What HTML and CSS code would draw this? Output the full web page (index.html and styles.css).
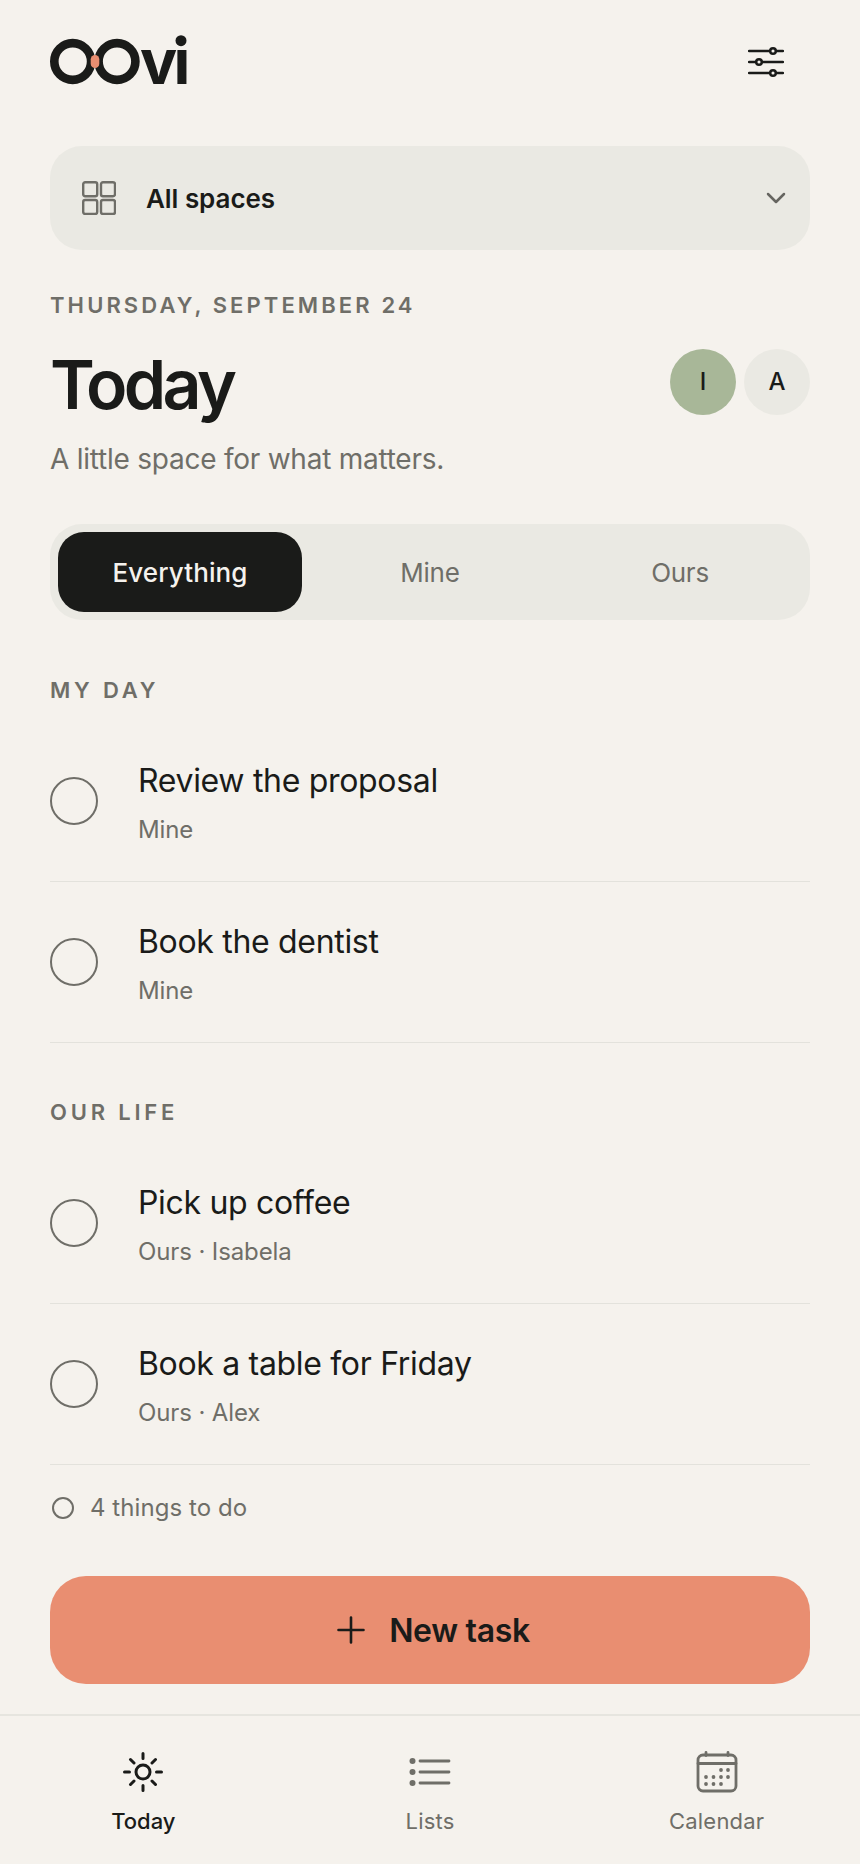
FILE: index.html
```html
<!DOCTYPE html>
<html lang="en">
<head>
<meta charset="utf-8">
<title>Oovi</title>
<link rel="stylesheet" href="styles.css">
</head>
<body>
<div class="app">
  <main class="content">
    <header class="topbar">
      <svg class="logo" viewBox="0 0 140 52" width="140" height="52" aria-label="OOvi">
        <circle cx="22.700" cy="27.500" r="18.400" fill="none" stroke="#1a1b19" stroke-width="8.600"/>
        <circle cx="67" cy="27.500" r="18.400" fill="none" stroke="#1a1b19" stroke-width="8.600"/>
        <rect x="40.700" y="21" width="8.600" height="13" rx="4.300" fill="#e98e71"/>
        <text class="logo-text" x="90" y="50">vı</text>
        <circle cx="131" cy="6.700" r="5.500" fill="#1a1b19"/>
      </svg>
      <button class="icon-btn" aria-label="Settings">
        <svg viewBox="0 0 36 34" width="36" height="34" fill="none" stroke="#1a1b19" stroke-width="2.500" stroke-linecap="round">
          <path d="M1 5h34M1 16h34M1 27h34"/>
          <circle cx="25" cy="5" r="2.800" fill="#f5f2ed"/>
          <circle cx="11" cy="16" r="2.800" fill="#f5f2ed"/>
          <circle cx="25" cy="27" r="2.800" fill="#f5f2ed"/>
        </svg>
      </button>
    </header>

    <div class="space-select">
      <svg class="grid-icon" viewBox="0 0 34 34" width="34" height="34" fill="none" stroke="#6f6e68" stroke-width="2.400">
        <rect x="1.200" y="1.200" width="14" height="14" rx="2"/>
        <rect x="19" y="1.200" width="14" height="14" rx="2"/>
        <rect x="1.200" y="19" width="14" height="14" rx="2"/>
        <rect x="19" y="19" width="14" height="14" rx="2"/>
      </svg>
      <span class="space-name">All spaces</span>
      <svg class="chevron" viewBox="0 0 20 12" width="20" height="12" fill="none" stroke="#666560" stroke-width="2.500" stroke-linecap="round" stroke-linejoin="round">
        <path d="M2 2l8 8 8-8"/>
      </svg>
    </div>

    <p class="date">THURSDAY, SEPTEMBER 24</p>
    <div class="title-row">
      <h1 class="title">Today</h1>
      <div class="avatars">
        <span class="avatar avatar-i">I</span>
        <span class="avatar avatar-a">A</span>
      </div>
    </div>
    <p class="subtitle">A little space for what matters.</p>

    <div class="segments">
      <span class="segment segment-active">Everything</span>
      <span class="segment">Mine</span>
      <span class="segment">Ours</span>
    </div>

    <section class="group">
      <h2 class="group-label">MY DAY</h2>
      <div class="task"><span class="check"></span><div class="task-text"><div class="task-title">Review the proposal</div><div class="task-meta">Mine</div></div></div>
      <div class="task"><span class="check"></span><div class="task-text"><div class="task-title">Book the dentist</div><div class="task-meta">Mine</div></div></div>
    </section>

    <section class="group">
      <h2 class="group-label">OUR LIFE</h2>
      <div class="task"><span class="check"></span><div class="task-text"><div class="task-title">Pick up coffee</div><div class="task-meta">Ours · Isabela</div></div></div>
      <div class="task"><span class="check"></span><div class="task-text"><div class="task-title">Book a table for Friday</div><div class="task-meta">Ours · Alex</div></div></div>
    </section>

    <div class="summary"><span class="summary-dot"></span><span>4 things to do</span></div>

    <button class="new-task">
      <svg viewBox="0 0 28 28" width="28" height="28" fill="none" stroke="#1a1b19" stroke-width="2.600" stroke-linecap="round"><path d="M14 1.500v25M1.500 14h25"/></svg>
      <span>New task</span>
    </button>
  </main>

  <nav class="tabbar">
    <div class="tab tab-active">
      <svg viewBox="0 0 42 42" width="42" height="42" fill="none" stroke="#1a1b19" stroke-width="3" stroke-linecap="round">
        <circle cx="21" cy="21" r="7"/>
        <path d="M21 2.500v5M21 34.500v5M2.500 21h5M34.500 21h5M8.500 8.500l3.500 3.500M30 30l3.500 3.500M8.500 33.500l3.500-3.500M30 12l3.500-3.500"/>
      </svg>
      <span>Today</span>
    </div>
    <div class="tab">
      <svg viewBox="0 0 42 42" width="42" height="42" fill="none" stroke="#6f6e68" stroke-width="2.800" stroke-linecap="round">
        <path d="M11 10h29M11 21h29M11 32h29"/>
        <g fill="#6f6e68" stroke="none"><circle cx="3.500" cy="10" r="3"/><circle cx="3.500" cy="21" r="3"/><circle cx="3.500" cy="32" r="3"/></g>
      </svg>
      <span>Lists</span>
    </div>
    <div class="tab">
      <svg viewBox="0 0 42 42" width="42" height="42" fill="none" stroke="#6f6e68" stroke-width="2.800" stroke-linecap="round">
        <rect x="2" y="4" width="38" height="36" rx="5"/>
        <path d="M2 12.500h38M10 1.500v3M32 1.500v3"/>
        <g fill="#6f6e68" stroke="none">
          <circle cx="25" cy="19" r="1.900"/><circle cx="32" cy="19" r="1.900"/>
          <circle cx="10" cy="26" r="1.900"/><circle cx="17.500" cy="26" r="1.900"/><circle cx="25" cy="26" r="1.900"/><circle cx="32" cy="26" r="1.900"/>
          <circle cx="10" cy="33" r="1.900"/><circle cx="17.500" cy="33" r="1.900"/><circle cx="25" cy="33" r="1.900"/>
        </g>
      </svg>
      <span>Calendar</span>
    </div>
  </nav>
</div>
</body>
</html>
```
FILE: styles.css
```css
* { box-sizing: border-box; }
html, body { margin: 0; padding: 0; }
body {
  background: #f5f2ed;
  color: #1a1b19;
  font-family: Inter, "Noto Sans", sans-serif;
}
p, h1, h2 { margin: 0; font: inherit; }
button { font: inherit; color: inherit; background: none; border: 0; padding: 0; }

.app { width: 860px; height: 1864px; display: flex; flex-direction: column; }
.content { flex: 1; padding: 0 50px; display: flex; flex-direction: column; }

.topbar { height: 146px; padding-top: 34px; display: flex; justify-content: space-between; align-items: flex-start; }
.logo { display: block; overflow: visible; }
.logo-text { font-family: Inter, sans-serif; font-weight: 700; font-size: 62px; letter-spacing: -3.600px; fill: #1a1b19; }
.icon-btn { margin-top: 12px; margin-right: 26px; display: block; }
.icon-btn svg { display: block; }

.space-select {
  height: 104px; background: #eae9e3; border-radius: 32px;
  display: flex; align-items: center; padding: 0 24px 0 32px;
}
.grid-icon { flex: none; }
.space-name { flex: 1; margin-left: 30px; font-size: 26px; font-weight: 600; letter-spacing: -0.05px; }

.date { margin-top: 41px; font-size: 22px; line-height: 28px; font-weight: 600; letter-spacing: 3.100px; color: #6f6e68; }
.title-row { margin-top: 20px; display: flex; justify-content: space-between; align-items: center; height: 90px; }
.title { font-size: 68px; line-height: 90px; font-weight: 600; letter-spacing: -3.600px; }
.avatars { display: flex; gap: 8px; margin-top: -5px; }
.avatar {
  width: 66px; height: 66px; border-radius: 50%;
  display: flex; align-items: center; justify-content: center;
  font-size: 24px; font-weight: 500;
}
.avatar-i { background: #a8b798; }
.avatar-a { background: #eae9e3; }
.subtitle { margin-top: 10px; font-size: 28px; line-height: 40px; letter-spacing: -0.24px; color: #6f6e68; }

.segments {
  margin-top: 45px; height: 96px; padding: 8px; background: #eae9e3; border-radius: 32px;
  display: grid; grid-template-columns: repeat(3, 1fr); gap: 6px;
}
.segment { display: flex; align-items: center; justify-content: center; font-size: 26px; letter-spacing: -0.26px; color: #6f6e68; border-radius: 26px; }
.segment-active { background: #1a1b19; color: #f5f2ed; font-weight: 500; letter-spacing: 0.1px; }

.group { margin-top: 55px; }
.segments + .group { margin-top: 56px; }
.group-label { font-size: 22px; line-height: 28px; font-weight: 600; letter-spacing: 3.800px; color: #6f6e68; }
.task {
  height: 161px; padding-bottom: 1px; display: flex; align-items: center; gap: 40px;
  border-bottom: 1px solid #e3e2dc;
}
.group-label + .task { margin-top: 17px; }
.check { flex: none; width: 48px; height: 48px; border-radius: 50%; border: 2px solid #6f6e68; }
.task-text { padding-top: 4px; }
.task-title { font-size: 32px; line-height: 40px; letter-spacing: -0.32px; }
.task-meta { margin-top: 14px; font-size: 24px; line-height: 30px; letter-spacing: -0.12px; color: #6f6e68; }

.summary { height: 85px; display: flex; align-items: center; gap: 16px; font-size: 24px; letter-spacing: 0.06px; color: #6f6e68; padding-left: 2px; }
.summary-dot { width: 22px; height: 22px; border-radius: 50%; border: 2px solid #6f6e68; }

.new-task {
  margin-top: 26px; height: 108px; padding-left: 7px; background: #e98e71; border-radius: 36px;
  display: flex; align-items: center; justify-content: center; gap: 24px;
  font-size: 32px; font-weight: 600; letter-spacing: -0.32px;
}
.new-task svg { display: block; }

.tabbar { height: 150px; border-top: 2px solid #e6e5df; display: grid; grid-template-columns: repeat(3, 1fr); }
.tab { display: flex; flex-direction: column; align-items: center; padding-top: 35px; font-size: 22px; letter-spacing: 0.2px; color: #6f6e68; }
.tab svg { display: block; }
.tab span { margin-top: 14px; line-height: 28px; }
.tab-active { color: #1a1b19; font-weight: 500; letter-spacing: 0; }
```
